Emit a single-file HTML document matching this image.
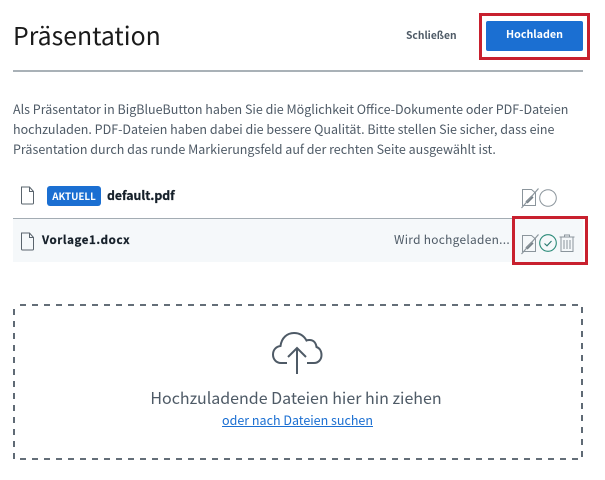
<!DOCTYPE html>
<html lang="de">
<head>
<meta charset="utf-8">
<title>Präsentation</title>
<style>
html,body{margin:0;padding:0;background:#fff}
#p{position:relative;width:605px;height:480px;overflow:hidden;background:#fff;font-family:"Noto Sans CJK JP","Liberation Sans",sans-serif;color:#4e5a66}
#p>*{position:absolute}
.t{white-space:nowrap;margin:0}
svg{overflow:visible;fill:none}
</style>
</head>
<body>
<div id="p">
<div class="t" style="left:13px;top:16px;font-size:24.800px;line-height:38px;color:#1a1a1a">Präsentation</div>
<div class="t" style="left:406px;top:25px;font-size:10.300px;line-height:20px;font-weight:700;color:#4e5a66">Schließen</div>
<div style="left:486px;top:21px;width:97px;height:30px;background:#1b6fd2;border-radius:2px"></div>
<div class="t" style="left:486px;top:25px;width:97px;text-align:center;font-size:10.700px;line-height:20px;font-weight:700;color:#fff">Hochladen</div>
<div style="left:479px;top:13px;width:105px;height:41px;border:3px solid #c8202e"></div>
<div style="left:13px;top:70px;width:570px;height:2px;background:#a9b1b7"></div>

<div class="t" style="left:13px;top:99px;font-size:12.500px;line-height:20px">Als Präsentator in BigBlueButton haben Sie die Möglichkeit Office-Dokumente oder PDF-Dateien</div>
<div class="t" style="left:13px;top:119px;font-size:12.500px;line-height:20px">hochzuladen. PDF-Dateien haben dabei die bessere Qualität. Bitte stellen Sie sicher, dass eine</div>
<div class="t" style="left:13px;top:139px;font-size:12.500px;line-height:20px">Präsentation durch das runde Markierungsfeld auf der rechten Seite ausgewählt ist.</div>

<svg style="left:20px;top:186px" width="15" height="19" viewBox="0 0 15 19"><path d="M1.500 1h8l4 4.500v11.500a1 1 0 0 1-1 1h-10a1 1 0 0 1-1-1z M9.500 1v4.500h4" stroke="#5a646d" stroke-width="1"/></svg>
<div style="left:47px;top:186px;width:54px;height:20px;background:#1b6fd2;border-radius:3px"></div>
<div class="t" style="left:47px;top:186px;width:54px;text-align:center;font-size:9.800px;line-height:20px;font-weight:700;color:#fff">AKTUELL</div>
<div class="t" style="left:107px;top:185px;font-size:12.300px;line-height:20px;font-weight:700;-webkit-text-stroke:.25px #16202a;color:#16202a">default.pdf</div>

<div style="left:13px;top:218px;width:570px;height:1px;background:#a3acb3"></div>
<div style="left:13px;top:219px;width:570px;height:43px;background:#f5f8fa"></div>
<svg style="left:20px;top:232px" width="15" height="19" viewBox="0 0 15 19"><path d="M1.500 1h8l4 4.500v11.500a1 1 0 0 1-1 1h-10a1 1 0 0 1-1-1z M9.500 1v4.500h4" stroke="#5a646d" stroke-width="1"/></svg>
<div class="t" style="left:42px;top:230px;font-size:11.500px;line-height:20px;font-weight:700;letter-spacing:.6px;-webkit-text-stroke:.25px #16202a;color:#16202a">Vorlage1.docx</div>
<div class="t" style="left:394px;top:230px;font-size:11.900px;line-height:20px;letter-spacing:.3px;color:#4e5a66">Wird hochgeladen...</div>

<svg style="left:521px;top:188px" width="18" height="20" viewBox="0 0 18 20"><path d="M1.500 1.500h9l4 3.500v12.500h-13z" stroke="#8b959c" stroke-width="1"/><path d="M5.500 14.500l6-6" stroke="#757f86" stroke-width="3"/><path d="M.5 20L17.500 .5" stroke="#8b959c" stroke-width="1.200"/></svg>
<svg style="left:539px;top:189px" width="18" height="18" viewBox="0 0 18 18"><circle cx="9" cy="9" r="8.300" stroke="#8b959c" stroke-width="1"/></svg>

<div style="left:512px;top:216px;width:70px;height:43px;border:3px solid #c8202e"></div>
<svg style="left:521px;top:234px" width="18" height="20" viewBox="0 0 18 20"><path d="M1.500 1.500h9l4 3.500v12.500h-13z" stroke="#8b959c" stroke-width="1"/><path d="M5.500 14.500l6-6" stroke="#757f86" stroke-width="3"/><path d="M.5 20L17.500 .5" stroke="#8b959c" stroke-width="1.200"/></svg>
<svg style="left:539px;top:234px" width="18" height="18" viewBox="0 0 18 18"><circle cx="9" cy="9" r="8.300" stroke="#2a8a78" stroke-width="1.100"/><path d="M5.500 9.500l2.500 2.300 4.500-4.800" stroke="#2a7a70" stroke-width="1.100"/></svg>
<svg style="left:559px;top:234px" width="16" height="18" viewBox="0 0 16 18"><path d="M.5 3h15 M5.500 3v-2h5v2 M2 3v14.500h12v-14.500 M5 6v9 M8 6v9 M11 6v9" stroke="#8b959c" stroke-width="1"/></svg>

<svg style="left:13px;top:304px" width="570" height="156"><rect x="1" y="1" width="568" height="154" stroke="#4e5a66" stroke-width="1.800" stroke-dasharray="6 6" stroke-dashoffset="6"/></svg>
<svg style="left:272px;top:332px" width="50" height="42" viewBox="0 0 50 42"><path d="M15 31H9C4 31 1 27 1 22.500C1 18 4 14.500 8.500 14C9.500 6 15 1 22 1C28 1 32 4 34.500 8.500C35.500 8 36.500 8 37.500 8C42 8 44 11.500 44.500 15C47.500 16 49.500 19 49.500 23C49.500 28 46 31 42 31H35 M25 42V16 M16 25L25 16L34 25" stroke="#4e5a66" stroke-width="2"/></svg>
<div class="t" style="left:0;top:386px;width:592px;text-align:center;font-size:16px;line-height:22px;color:#4e5a66">Hochzuladende Dateien hier hin ziehen</div>
<div class="t" style="left:0;top:410px;width:595px;text-align:center;font-size:12.500px;line-height:20px;color:#1b6fd2;text-decoration:underline">oder nach Dateien suchen</div>
</div>
</body>
</html>
